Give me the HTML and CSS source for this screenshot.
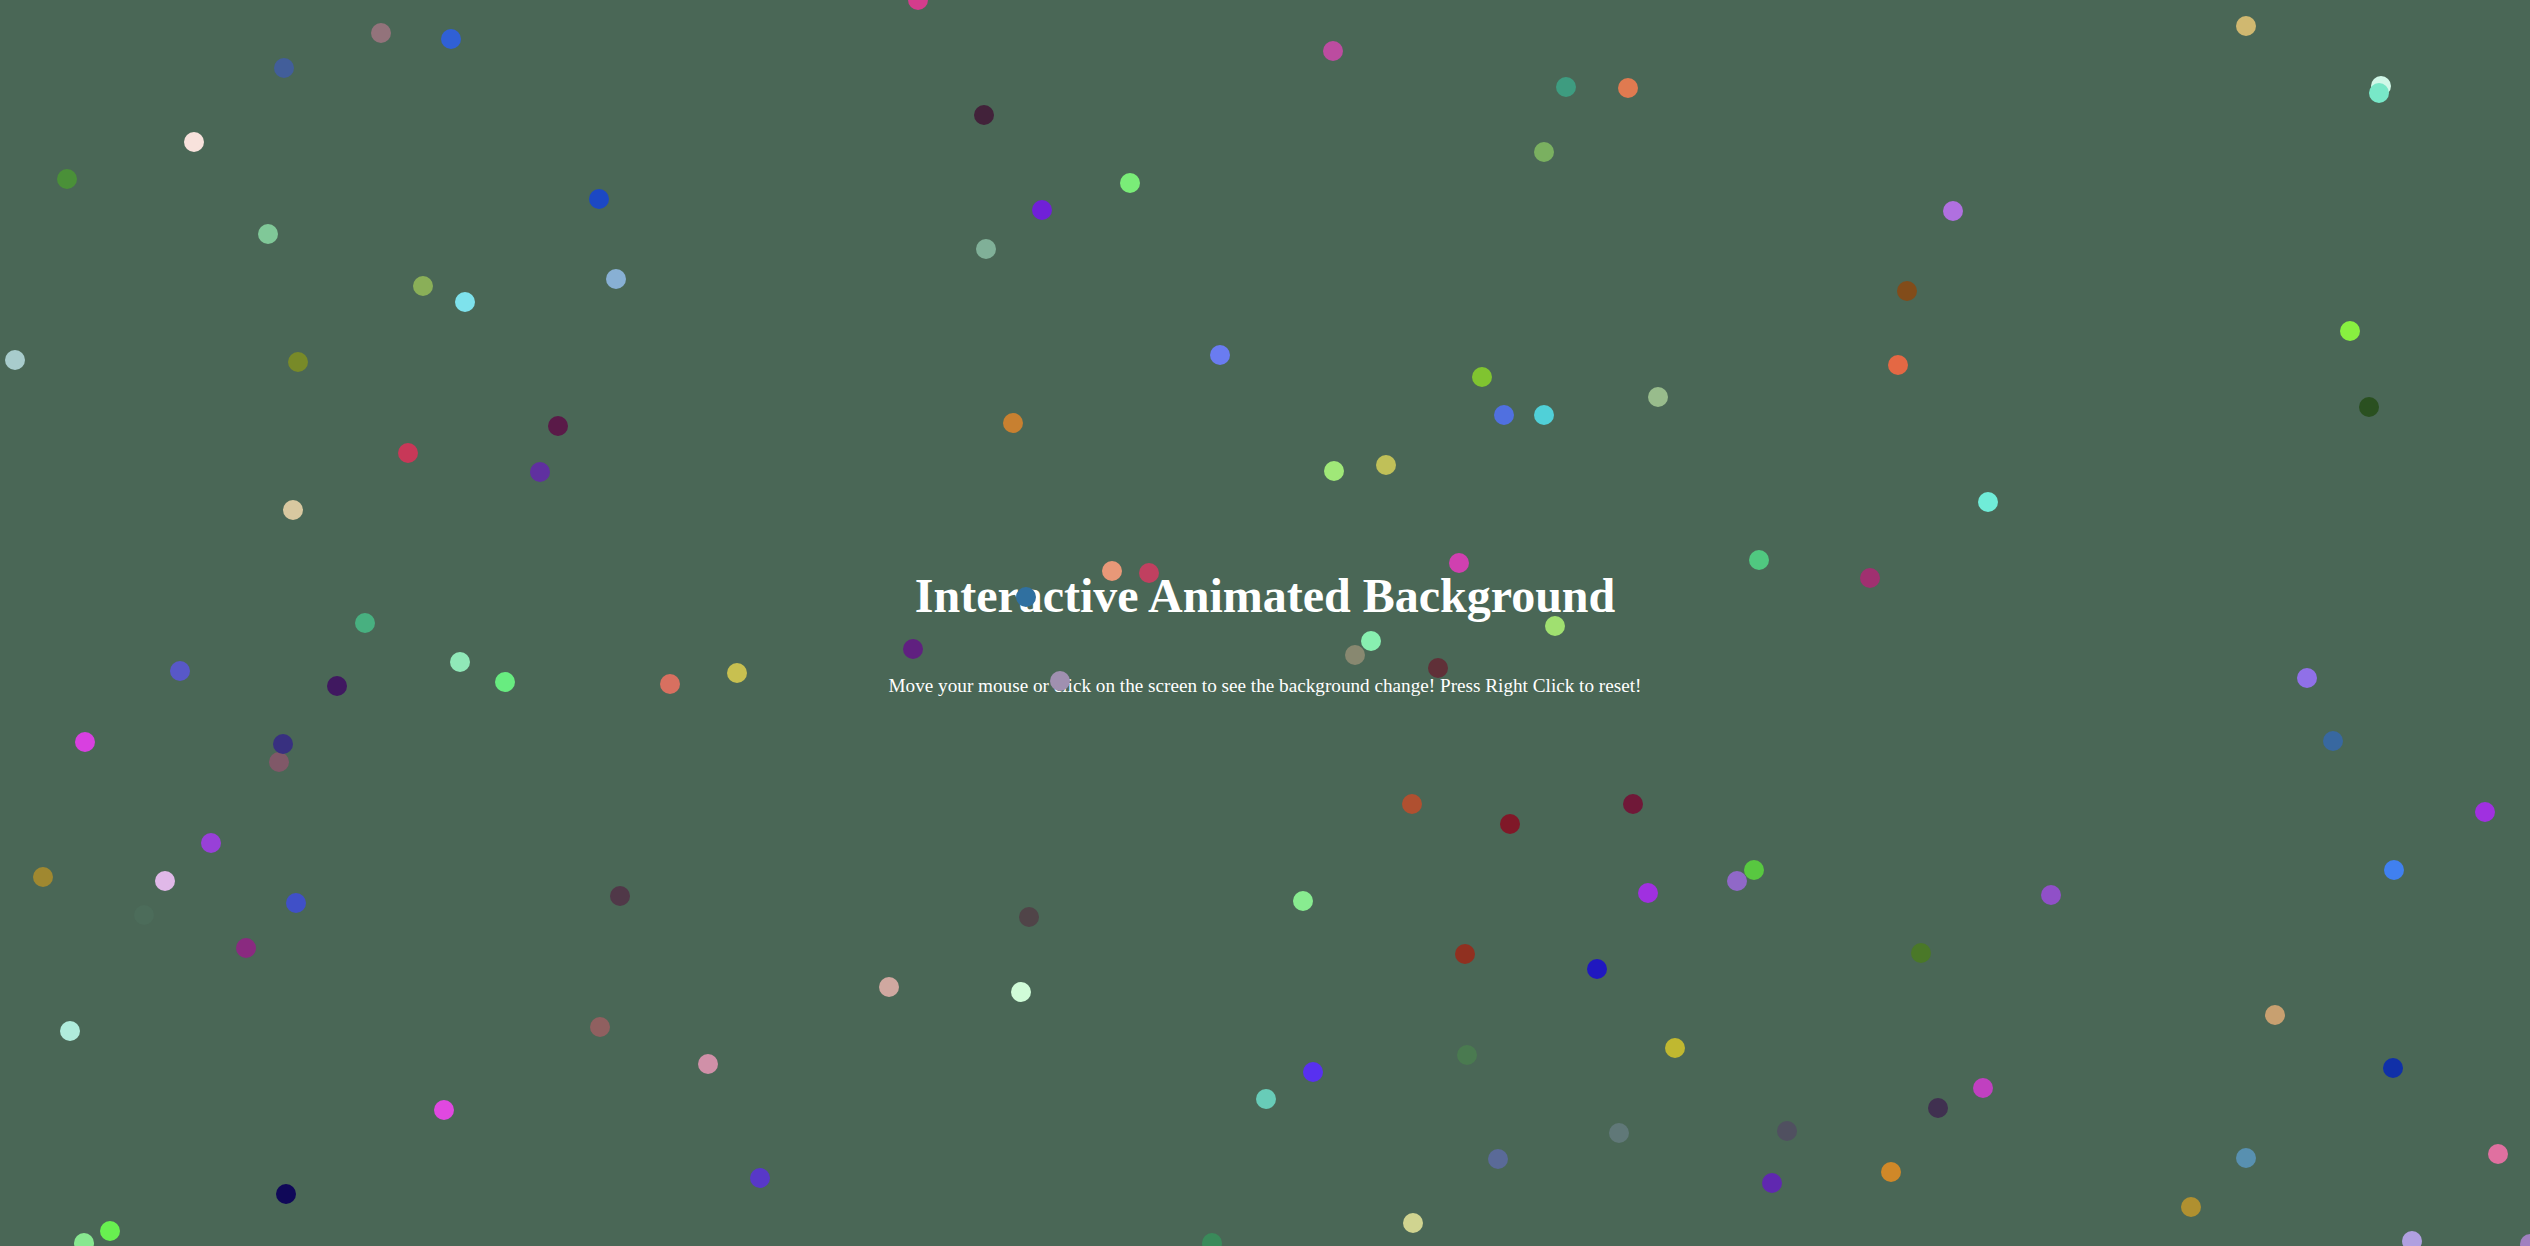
FILE: index.html
```html
<!DOCTYPE html>
<html lang="en">
<head>
<meta charset="utf-8">
<title>Interactive Animated Background</title>
<link rel="stylesheet" href="styles.css">
</head>
<body>
<main class="hero">
  <h1 class="hero-title">Interactive Animated Background</h1>
  <p class="hero-text">Move your mouse or click on the screen to see the background change! Press Right Click to reset!</p>
</main>
<svg class="particles" viewBox="0 0 2530 1246" preserveAspectRatio="none" aria-hidden="true">
  <g class="dots">
    <circle cx="381" cy="33" r="10" fill="#93737b"/>
    <circle cx="451" cy="39" r="10" fill="#3060d6"/>
    <circle cx="284" cy="68" r="10" fill="#425e9a"/>
    <circle cx="194" cy="142" r="10" fill="#f8e2dc"/>
    <circle cx="67" cy="179" r="10" fill="#4a9038"/>
    <circle cx="268" cy="234" r="10" fill="#80c898"/>
    <circle cx="599" cy="199" r="10" fill="#1c48c4"/>
    <circle cx="423" cy="286" r="10" fill="#8aaf58"/>
    <circle cx="465" cy="302" r="10" fill="#7ee2ec"/>
    <circle cx="616" cy="279" r="10" fill="#88b0d4"/>
    <circle cx="15" cy="360" r="10" fill="#a8cccc"/>
    <circle cx="298" cy="362" r="10" fill="#788a28"/>

    <circle cx="918" cy="0" r="10" fill="#d43c8c"/>
    <circle cx="984" cy="115" r="10" fill="#42223a"/>
    <circle cx="1130" cy="183" r="10" fill="#7aec78"/>
    <circle cx="1042" cy="210" r="10" fill="#7020d8"/>
    <circle cx="986" cy="249" r="10" fill="#80b098"/>
    <circle cx="1220" cy="355" r="10" fill="#6a7cf0"/>

    <circle cx="1333" cy="51" r="10" fill="#bc4ca0"/>
    <circle cx="1566" cy="87" r="10" fill="#3e9c80"/>
    <circle cx="1628" cy="88" r="10" fill="#e07a50"/>
    <circle cx="1544" cy="152" r="10" fill="#7ab060"/>
    <circle cx="1907" cy="291" r="10" fill="#824c1a"/>
    <circle cx="1898" cy="365" r="10" fill="#e46844"/>
    <circle cx="1482" cy="377" r="10" fill="#80c430"/>
    <circle cx="1658" cy="397" r="10" fill="#98bc8c"/>

    <circle cx="2246" cy="26" r="10" fill="#d0b870"/>
    <circle cx="2381" cy="86" r="10" fill="#d0f8e8"/>
    <circle cx="2379" cy="93" r="10" fill="#78e8c8"/>
    <circle cx="1953" cy="211" r="10" fill="#b070e0"/>
    <circle cx="2350" cy="331" r="10" fill="#88f040"/>
    <circle cx="2369" cy="407" r="10" fill="#2a5020"/>

    <circle cx="558" cy="426" r="10" fill="#5a1a48"/>
    <circle cx="408" cy="453" r="10" fill="#c83858"/>
    <circle cx="540" cy="472" r="10" fill="#6030a0"/>
    <circle cx="293" cy="510" r="10" fill="#d8c8a0"/>
    <circle cx="365" cy="623" r="10" fill="#48b080"/>
    <circle cx="460" cy="662" r="10" fill="#90e8b8"/>
    <circle cx="505" cy="682" r="10" fill="#68ec80"/>
    <circle cx="180" cy="671" r="10" fill="#5858c8"/>
    <circle cx="337" cy="686" r="10" fill="#401860"/>
    <circle cx="85" cy="742" r="10" fill="#d840e0"/>
    <circle cx="279" cy="762" r="10" fill="#805868"/>
    <circle cx="283" cy="744" r="10" fill="#383080"/>
    <circle cx="211" cy="843" r="10" fill="#9840d8"/>

    <circle cx="43" cy="877" r="10" fill="#a08830"/>
    <circle cx="165" cy="881" r="10" fill="#e0b8e8"/>
    <circle cx="296" cy="903" r="10" fill="#4050c8"/>
    <circle cx="620" cy="896" r="10" fill="#503848"/>
    <circle cx="144" cy="915" r="10" fill="#4c6c5a"/>
    <circle cx="246" cy="948" r="10" fill="#8a2a80"/>
    <circle cx="70" cy="1031" r="10" fill="#b0ecdc"/>
    <circle cx="600" cy="1027" r="10" fill="#906060"/>
    <circle cx="444" cy="1110" r="10" fill="#e048e0"/>
    <circle cx="286" cy="1194" r="10" fill="#100858"/>
    <circle cx="110" cy="1231" r="10" fill="#68f050"/>
    <circle cx="84" cy="1243" r="10" fill="#88e890"/>

    <circle cx="1029" cy="917" r="10" fill="#504448"/>
    <circle cx="889" cy="987" r="10" fill="#d0a8a0"/>
    <circle cx="1021" cy="992" r="10" fill="#d0fcd8"/>
    <circle cx="708" cy="1064" r="10" fill="#d090a8"/>
    <circle cx="1266" cy="1099" r="10" fill="#68ccb8"/>
    <circle cx="760" cy="1178" r="10" fill="#5838c8"/>
    <circle cx="1212" cy="1243" r="10" fill="#3a8a5a"/>

    <circle cx="1303" cy="901" r="10" fill="#88ec90"/>
    <circle cx="1648" cy="893" r="10" fill="#a030e0"/>
    <circle cx="1737" cy="881" r="10" fill="#9068c8"/>
    <circle cx="1754" cy="870" r="10" fill="#58c840"/>
    <circle cx="1465" cy="954" r="10" fill="#903020"/>
    <circle cx="1597" cy="969" r="10" fill="#2018c0"/>
    <circle cx="1921" cy="953" r="10" fill="#4a7828"/>
    <circle cx="1675" cy="1048" r="10" fill="#c0b830"/>
    <circle cx="1467" cy="1055" r="10" fill="#4a7a50"/>
    <circle cx="1313" cy="1072" r="10" fill="#5830f0"/>
    <circle cx="1619" cy="1133" r="10" fill="#607878"/>
    <circle cx="1787" cy="1131" r="10" fill="#505060"/>
    <circle cx="1498" cy="1159" r="10" fill="#5a6a98"/>
    <circle cx="1772" cy="1183" r="10" fill="#6028b0"/>
    <circle cx="1891" cy="1172" r="10" fill="#d08828"/>
    <circle cx="1413" cy="1223" r="10" fill="#d0d490"/>

    <circle cx="1013" cy="423" r="10" fill="#c88030"/>
    <circle cx="1504" cy="415" r="10" fill="#5070e0"/>
    <circle cx="1544" cy="415" r="10" fill="#50d0d8"/>
    <circle cx="1334" cy="471" r="10" fill="#a0e878"/>
    <circle cx="1386" cy="465" r="10" fill="#c0c058"/>
    <circle cx="1988" cy="502" r="10" fill="#70ecd8"/>
    <circle cx="1759" cy="560" r="10" fill="#50c880"/>
    <circle cx="1870" cy="578" r="10" fill="#a03070"/>
    <circle cx="1459" cy="563" r="10" fill="#d040b0"/>
    <circle cx="1112" cy="571" r="10" fill="#e89878"/>
    <circle cx="1149" cy="573" r="10" fill="#c04060"/>
    <circle cx="1026" cy="597" r="10" fill="#3070a0"/>
    <circle cx="1555" cy="626" r="10" fill="#a0e070"/>
    <circle cx="1355" cy="655" r="10" fill="#888870"/>
    <circle cx="1371" cy="641" r="10" fill="#88f0b0"/>
    <circle cx="1438" cy="668" r="10" fill="#603038"/>
    <circle cx="913" cy="649" r="10" fill="#602080"/>
    <circle cx="1060" cy="681" r="10" fill="#a090b0"/>
    <circle cx="670" cy="684" r="10" fill="#d87060"/>
    <circle cx="737" cy="673" r="10" fill="#c8c050"/>

    <circle cx="2307" cy="678" r="10" fill="#9070e8"/>
    <circle cx="2333" cy="741" r="10" fill="#3868a0"/>
    <circle cx="2485" cy="812" r="10" fill="#a030e0"/>
    <circle cx="2394" cy="870" r="10" fill="#4080f0"/>
    <circle cx="2051" cy="895" r="10" fill="#9050c8"/>
    <circle cx="2275" cy="1015" r="10" fill="#c8a070"/>
    <circle cx="2393" cy="1068" r="10" fill="#1030a8"/>
    <circle cx="1983" cy="1088" r="10" fill="#c040c0"/>
    <circle cx="1938" cy="1108" r="10" fill="#403050"/>
    <circle cx="2246" cy="1158" r="10" fill="#5890b0"/>
    <circle cx="2191" cy="1207" r="10" fill="#b09030"/>
    <circle cx="2498" cy="1154" r="10" fill="#e070a0"/>
    <circle cx="2412" cy="1241" r="10" fill="#b0a0e0"/>
    <circle cx="2530" cy="1244" r="10" fill="#a080c0"/>

    <circle cx="1412" cy="804" r="10" fill="#b05030"/>
    <circle cx="1510" cy="824" r="10" fill="#801828"/>
    <circle cx="1633" cy="804" r="10" fill="#701838"/>
  </g>
</svg>
</body>
</html>
```

FILE: styles.css
```css
html, body {
  margin: 0;
  padding: 0;
  height: 100%;
}

body {
  background: #4a6756;
  color: #ffffff;
  font-family: "Liberation Serif", "Times New Roman", serif;
  overflow: hidden;
}

.hero {
  box-sizing: border-box;
  height: 100vh;
  padding-top: 6px;
  display: flex;
  flex-direction: column;
  align-items: center;
  justify-content: center;
  text-align: center;
}

.hero-title {
  font-size: 48px;
  font-weight: bold;
  margin: 32px 0;
}

.hero-text {
  font-size: 19.2px;
  margin: 19.2px 0;
}

.particles {
  position: fixed;
  top: 0;
  left: 0;
  width: 100%;
  height: 100%;
  pointer-events: none;
  z-index: 1;
}
```
